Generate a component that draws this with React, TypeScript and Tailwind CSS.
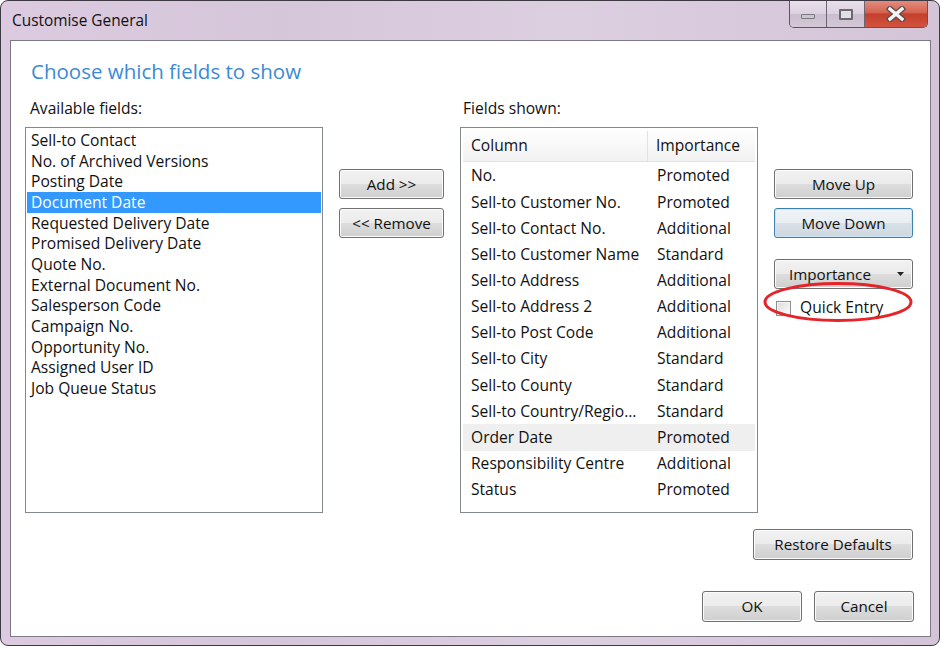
import React from "react";

const available = [
  "Sell-to Contact",
  "No. of Archived Versions",
  "Posting Date",
  "Document Date",
  "Requested Delivery Date",
  "Promised Delivery Date",
  "Quote No.",
  "External Document No.",
  "Salesperson Code",
  "Campaign No.",
  "Opportunity No.",
  "Assigned User ID",
  "Job Queue Status",
];

const shown: [string, string][] = [
  ["No.", "Promoted"],
  ["Sell-to Customer No.", "Promoted"],
  ["Sell-to Contact No.", "Additional"],
  ["Sell-to Customer Name", "Standard"],
  ["Sell-to Address", "Additional"],
  ["Sell-to Address 2", "Additional"],
  ["Sell-to Post Code", "Additional"],
  ["Sell-to City", "Standard"],
  ["Sell-to County", "Standard"],
  ["Sell-to Country/Regio...", "Standard"],
  ["Order Date", "Promoted"],
  ["Responsibility Centre", "Additional"],
  ["Status", "Promoted"],
];

function Btn({
  children,
  className = "",
  focused = false,
}: {
  children: React.ReactNode;
  className?: string;
  focused?: boolean;
}) {
  return (
    <div
      className={
        "flex h-[30px] items-center justify-center rounded-[3px] border text-[15.2px] text-[#111] " +
        (focused
          ? "border-[#3c7fb1] bg-[linear-gradient(#f0f4f7_0%,#e8eef2_50%,#d9e1e7_50%,#ced8df_100%)] shadow-[inset_0_0_0_1px_#c8e6f8]"
          : "border-[#707070] bg-[linear-gradient(#f2f2f2_0%,#ebebeb_50%,#dddddd_50%,#cfcfcf_100%)] shadow-[inset_0_0_0_1px_#fcfcfc]") +
        " " +
        className
      }
    >
      {children}
    </div>
  );
}

export default function App() {
  return (
    <div
      className="h-[647px] w-[941px] bg-white"
      style={{ fontFamily: '"Open Sans", "Noto Sans", sans-serif' }}
    >
      <div className="relative flex h-[646px] w-[940px] flex-col rounded-[8px] border border-[#3e3a44] bg-[linear-gradient(90deg,#dccbe0_0%,#d6c6da_30%,#dccfe0_60%,#d4c4d8_100%)] pb-[8px] pl-[9px] pr-[8px]">
        {/* Title bar */}
        <div className="flex h-[39px] items-start justify-between">
          <div className="pl-[2px] pt-[8px] text-[15.4px] text-[#111]">Customise General</div>
          <div className="mr-[3px] flex h-[27px] overflow-hidden rounded-b-[5px] border border-t-0 border-[#5a5466]">
            <div className="flex w-[37px] items-center justify-center border-r border-[#6a6474] bg-[linear-gradient(#e8dfea_0%,#dcd1df_50%,#cbbdce_50%,#d4c8d7_100%)]">
              <div className="mt-[4px] h-[5px] w-[14px] rounded-[1px] border border-[#7a7a80] bg-[#c8c8cc]" />
            </div>
            <div className="flex w-[38px] items-center justify-center border-r border-[#6a6474] bg-[linear-gradient(#e8dfea_0%,#dcd1df_50%,#cbbdce_50%,#d4c8d7_100%)]">
              <div className="h-[11px] w-[14px] rounded-[1px] border-2 border-[#6a6a70] bg-[#e0e0e4]" />
            </div>
            <div className="flex w-[62px] items-center justify-center bg-[linear-gradient(#e48c7e_0%,#d4624f_45%,#c4402c_50%,#d2533d_100%)]">
              <svg width="20" height="16" viewBox="0 0 20 16">
                <path d="M4 3 L16 13 M16 3 L4 13" stroke="#5a4a4a" strokeWidth="6" strokeLinecap="square" />
                <path d="M4 3 L16 13 M16 3 L4 13" stroke="#f4f4f4" strokeWidth="3.4" strokeLinecap="square" />
              </svg>
            </div>
          </div>
        </div>

        {/* Client area */}
        <div className="flex flex-1 flex-col border border-[#7d7888] bg-white px-[14px] text-[#111]">
          <div className="ml-[6px] mt-[16px] h-[28px] text-[20.5px] leading-[28px] text-[#3a8ad6]">
            Choose which fields to show
          </div>

          <div className="mt-[13px] flex gap-[16px]">
            {/* Available */}
            <div className="flex w-[298px] flex-col">
              <div className="h-[20px] pl-[5px] text-[15.6px] leading-[20px]">Available fields:</div>
              <div className="mt-[9px] h-[386px] border border-[#828790] p-[1px] pt-[2px]">
                {available.map((a) => (
                  <div
                    key={a}
                    className={
                      "h-[20.67px] pl-[4px] text-[15.6px] leading-[20.67px] " +
                      (a === "Document Date" ? "bg-[#3399ff] text-white" : "")
                    }
                  >
                    {a}
                  </div>
                ))}
              </div>
            </div>

            {/* Add/Remove */}
            <div className="mt-[71px] flex w-[105px] flex-col gap-[9px]">
              <Btn>Add &gt;&gt;</Btn>
              <Btn>&lt;&lt; Remove</Btn>
            </div>

            {/* Fields shown */}
            <div className="flex w-[298px] flex-col">
              <div className="h-[20px] pl-[3px] text-[15.6px] leading-[20px]">Fields shown:</div>
              <div className="mt-[9px] h-[386px] border border-[#828790] px-[2px] pt-[1px]">
                <div className="flex h-[33px] border-b border-[#e2e2e2] bg-[linear-gradient(#ffffff_0%,#f7f7f7_60%,#f1f1f1_100%)] pt-[2px] text-[15.6px]">
                  <div className="flex w-[185px] items-center border-r border-[#e2e2e2] pl-[8px]">Column</div>
                  <div className="flex items-center pl-[8px]">Importance</div>
                </div>
                <div className="pt-[1px]">
                  {shown.map(([c, i]) => (
                    <div
                      key={c}
                      className={
                        "flex h-[26.15px] items-center text-[15.6px] " +
                        (c === "Order Date" ? "bg-[#efefef]" : "")
                      }
                    >
                      <div className="w-[185px] whitespace-nowrap pl-[8px]">{c}</div>
                      <div className="pl-[9px]">{i}</div>
                    </div>
                  ))}
                </div>
              </div>
            </div>

            {/* Right buttons */}
            <div className="mt-[71px] flex w-[139px] flex-col">
              <Btn>Move Up</Btn>
              <Btn focused className="mt-[9px]">
                Move Down
              </Btn>
              <Btn className="relative mt-[21px] justify-start pl-[14px]">
                Importance
                <svg className="absolute right-[8px] top-[12px]" width="7" height="4" viewBox="0 0 7 4">
                  <path d="M0 0 H7 L3.5 4 Z" fill="#222" />
                </svg>
              </Btn>
              <div className="relative mt-[11px] flex h-[16px] items-center">
                <div className="ml-[2px] h-[15px] w-[15px] border border-[#8e8f8f] bg-[linear-gradient(135deg,#dcdcdc,#fbfbfb)] shadow-[inset_0_0_0_1px_#f4f4f4]" />
                <span className="ml-[9px] text-[15.6px]">Quick Entry</span>
                <svg
                  className="absolute left-[-11px] top-[-19px]"
                  width="152"
                  height="42"
                  viewBox="0 0 152 42"
                >
                  <ellipse cx="75" cy="21" rx="73" ry="18.5" fill="none" stroke="#e5242a" strokeWidth="3" />
                </svg>
              </div>
            </div>
          </div>

          <div className="mt-[16px] flex justify-end pr-[3px]">
            <Btn className="h-[31px] w-[160px]">Restore Defaults</Btn>
          </div>
          <div className="mt-[31px] flex justify-end gap-[12px] pr-[2px]">
            <Btn className="h-[31px] w-[100px]">OK</Btn>
            <Btn className="h-[31px] w-[100px]">Cancel</Btn>
          </div>
        </div>
      </div>
    </div>
  );
}
